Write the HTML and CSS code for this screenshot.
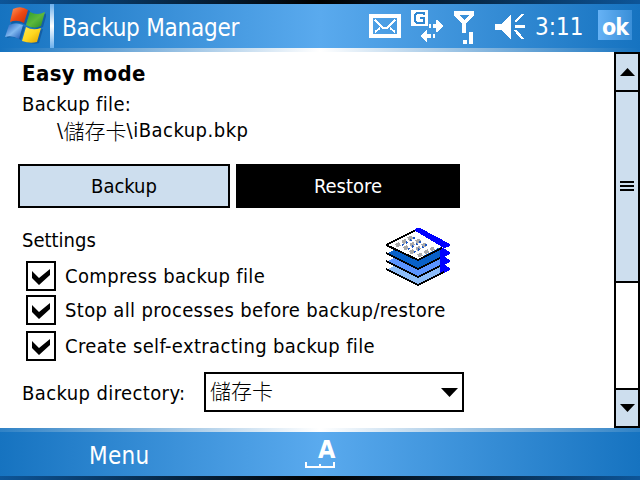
FILE: index.html
```html
<!DOCTYPE html>
<html lang="en">
<head>
    <meta charset="UTF-8">
    <title>Backup Manager</title>
    <link rel="stylesheet" href="styles.css">
</head>
<body>
    <header class="title-bar">
        <svg class="flag" width="42" height="38" viewBox="0 0 42 38">
            <defs>
                <linearGradient id="red" x2="1" y2="1"><stop offset="0" stop-color="#ff9a60"/><stop offset=".5" stop-color="#ee4a14"/><stop offset="1" stop-color="#c42c08"/></linearGradient>
                <linearGradient id="green" x2="1" y2="1"><stop offset="0" stop-color="#2c9c30"/><stop offset=".5" stop-color="#5cb83c"/><stop offset="1" stop-color="#248828"/></linearGradient>
                <linearGradient id="blue" x2="1" y2="1"><stop offset="0" stop-color="#1c58b8"/><stop offset=".5" stop-color="#80b8f0"/><stop offset="1" stop-color="#1450b0"/></linearGradient>
                <linearGradient id="yellow" x2="1" y2="1"><stop offset="0" stop-color="#ffe850"/><stop offset=".5" stop-color="#ffd820"/><stop offset="1" stop-color="#e0a000"/></linearGradient>
            </defs>
            <g fill="#0c4c90" opacity=".6">
                <path d="M10 3q8-4 16 1l-4 14q-7-4-15-1z"/>
                <path d="M28 6q7 4 15 0l-4 14q-7 4-14-1z"/>
                <path d="M6 19q8-3 15 1l-4 13q-7-5-14-2z"/>
                <path d="M24 21q7 4 15 1l-4 14q-7 2-15-2z"/>
            </g>
            <path fill="url(#red)" d="M9 2q8-4 15 1l-4 13q-7-4-14-1z"/>
            <path fill="url(#green)" d="M26 5q7 4 15 0l-4 14q-7 4-15-1z"/>
            <path fill="url(#blue)" d="M5 18q7-3 14 0l-4 14q-7-4-14-2z"/>
            <path fill="url(#yellow)" d="M22 20q7 4 15 1l-4 14q-7 2-15-1z"/>
        </svg>
        <div class="divider"></div>
        <h1 class="title">Backup Manager</h1>
        <div class="status">
            <svg width="32" height="24" viewBox="0 0 32 24" shape-rendering="crispEdges">
                <path fill="none" stroke="#fff" stroke-width="4" d="M2 2h28v20H2z"/>
                <path fill="none" stroke="#fff" stroke-width="2" d="M6 6l8 8h4l8-8M6 18l5-4M26 18l-5-4"/>
            </svg>
            <svg class="gprs" width="32" height="32" viewBox="0 0 32 32" shape-rendering="crispEdges">
                <path fill="#fff" d="M0 0h17v16H0z"/>
                <path fill="none" stroke="#2f87d2" stroke-width="2" d="M13 5V3H6L4 5v6l2 2h7V8H9"/>
                <path fill="#fff" d="M18 14h2v4h-2zM22 14h3v-4h1l6 6-6 6h-1v-4h-3zM22 24h2v4h-2zM20 24h-4v-4h-1l-6 6 6 6h1v-4h4z"/>
            </svg>
            <svg class="signal" width="20" height="34" viewBox="0 0 20 34" shape-rendering="crispEdges">
                <path fill="#fff" fill-rule="evenodd" d="M0 0h20v4l-8 9v9H8v-9L0 4zM5 4l5 5 5-5zM9 29h4v4H9zM15 21h4v12h-4z"/>
            </svg>
            <svg class="speaker" width="31" height="26" viewBox="0 0 31 26" shape-rendering="crispEdges">
                <path fill="#fff" d="M0 10h6L16 0v25L6 16H0z"/>
                <path fill="none" stroke="#fff" stroke-width="2.400" d="M20 8l8-8M20 12.500h10M20 16l8 9"/>
            </svg>
            <span class="clock">3:11</span>
            <button class="ok">ok</button>
        </div>
    </header>

    <main class="window">
        <div class="content">
            <h2 class="heading">Easy mode</h2>
            <div class="label">Backup file:</div>
            <div class="path"><span>\</span><span class="cjk">儲存卡</span><span>\iBackup.bkp</span></div>

            <div class="buttons">
                <button class="btn backup">Backup</button>
                <button class="btn restore">Restore</button>
            </div>

            <div class="settings">
                <div class="options">
                    <div class="settings-title">Settings</div>
                    <div class="option">
                        <svg class="check" viewBox="2 2 26 26"><path d="M6 10l7 7 11-9v6L13 24 6 17z"/></svg>
                        <span>Compress backup file</span>
                    </div>
                    <div class="option">
                        <svg class="check" viewBox="2 2 26 26"><path d="M6 10l7 7 11-9v6L13 24 6 17z"/></svg>
                        <span>Stop all processes before backup/restore</span>
                    </div>
                    <div class="option last">
                        <svg class="check" viewBox="2 2 26 26"><path d="M6 10l7 7 11-9v6L13 24 6 17z"/></svg>
                        <span>Create self-extracting backup file</span>
                    </div>
                </div>
                <!-- stack of sheets, drawn on a 32px grid -->
                <svg class="stack" width="64" height="58" viewBox="0 0 32 29" shape-rendering="crispEdges">
                    <path fill="#8cbcf8" d="M1 20.500l15-8 15 8-15 7.500z"/>
                    <path fill="#00f" d="M27 17l5 3v1l-4 2h-1z"/>
                    <path class="edge" d="M0 20.500l16 8 13-6.500"/>
                    <path fill="#5a94ff" d="M1 16.500l15-8 15 8-15 7.500z"/>
                    <path fill="#00f" d="M27 13l5 3v1l-4 2h-1z"/>
                    <path class="edge" d="M0 16.500l16 8 11-5.500"/>
                    <path fill="#0860c8" d="M1 12.500l15-8 15 8-15 7.500z"/>
                    <path fill="#00f" d="M27 9l5 3v1l-4 2h-1z"/>
                    <path class="edge" d="M0 12.500l16 8 11-5.500"/>
                    <path fill="#fff" d="M1 8.500l14-7 14 7-13 7z"/>
                    <path class="edge" d="M15 1L0 8.500l16 7.500 12-6"/>
                    <path fill="#00f" d="M14 1l1-1h2l15 8v1l-3 1z"/>
                    <path fill="none" stroke="#aaa" stroke-width="2" stroke-dasharray="2.300 1.200" d="M5 9l9-5M9 10.500l9-5M12 12.500l9-5M16 14l8-4"/>
                    <path fill="none" stroke="#1a56c4" stroke-dasharray="1 1.200" d="M8 8.500l7-4M11 10.500l7-4M14 12l7-4"/>
                </svg>
            </div>

            <div class="directory">
                <span class="text-dir">Backup directory:</span>
                <div class="select">
                    <span class="cjk">儲存卡</span>
                    <svg width="17" height="9" viewBox="0 0 17 9"><path d="M0 0h17L8.500 9z"/></svg>
                </div>
            </div>
        </div>

        <div class="scrollbar">
            <div class="arrow"><svg width="15" height="8" viewBox="0 0 15 8"><path d="M0 8h15L7.500 0z"/></svg></div>
            <div class="thumb"><i></i><i></i><i></i></div>
            <div class="track"></div>
            <div class="arrow"><svg width="15" height="8" viewBox="0 0 15 8"><path d="M0 0h15L7.500 8z"/></svg></div>
        </div>
    </main>

    <footer class="menu-bar">
        <span class="menu">Menu</span>
        <div class="input-mode">
            <span class="letter">A</span>
            <svg width="30" height="6" viewBox="0 0 30 6" shape-rendering="crispEdges"><path fill="#fff" d="M0 0h2v4h12V2h2v2h12V0h2v6H0z"/></svg>
        </div>
    </footer>
</body>
</html>
```
FILE: styles.css
```css
* {
    box-sizing: border-box;
}

body {
    margin: 0;
    width: 640px;
    height: 480px;
    overflow: hidden;
    display: flex;
    flex-direction: column;
    background: #fff;
    color: #000;
    font-family: "DejaVu Sans Condensed", "DejaVu Sans", "Noto Sans CJK TC", sans-serif;
    font-stretch: condensed;
    font-size: 20px;
    line-height: 26px;
    white-space: nowrap;
}

h1, h2 {
    margin: 0;
}

button {
    font: inherit;
    padding: 0;
    border: 0;
    border-radius: 0;
}

/* Top and bottom bars */
.title-bar, .menu-bar {
    height: 52px;
    flex: none;
    display: flex;
    color: #fff;
}

.title-bar {
    background:
        linear-gradient(90deg, #0d5598, #000 50%, #0d5598) 0 0 / 100% 4px no-repeat,
        linear-gradient(90deg, #1673c0, #fff 50%, #1673c0) 0 48px / 100% 4px no-repeat,
        linear-gradient(90deg, #1673c0, #5aaaee 50%, #1673c0);
}

.menu-bar {
    background:
        linear-gradient(90deg, #2f82c6, #fff 50%, #2f82c6) 0 0 / 100% 4px no-repeat,
        linear-gradient(90deg, #0d5598, #000 50%, #0d5598) 0 48px / 100% 4px no-repeat,
        linear-gradient(90deg, #1673c0, #5aaaee 50%, #1673c0);
}

.flag {
    margin: 7px 0 0 4px;
    flex: none;
}

.divider {
    width: 4px;
    height: 44px;
    margin: 4px 0 0 4px;
    background: linear-gradient(#6cb0ec, #fff 50%, #6cb0ec);
}

.title {
    margin: 12px 0 0 8px;
    font-size: 24px;
    font-weight: normal;
    letter-spacing: -0.25px;
    line-height: 32px;
}

.status {
    margin: 10px 8px 0 auto;
    display: flex;
}

.status > svg {
    flex: none;
    margin-top: 4px;
}

.status .gprs {
    margin: 0 0 0 10px;
}

.status .signal {
    margin: 1px 0 0 11px;
}

.status .speaker {
    margin: 4px 0 0 21px;
}

.clock {
    width: 46px;
    margin: 1px 0 0 9px;
    font-size: 24px;
    line-height: 32px;
}

.ok {
    width: 34px;
    height: 30px;
    margin-left: 17px;
    background: linear-gradient(90deg, #66b2f5, #3a8fd8);
    color: #fff;
    font-weight: bold;
    font-size: 23px;
    letter-spacing: -1px;
    line-height: 34px;
}

/* Form */
.window {
    height: 376px;
    display: flex;
}

.content {
    width: 614px;
    padding: 9px 0 0 18px;
}

.heading {
    padding-left: 4px;
    font-size: 22px;
    letter-spacing: 0.4px;
    line-height: 26px;
}

.label {
    margin-top: 4px;
    padding-left: 4px;
    letter-spacing: 0.35px;
}

.path {
    padding-left: 39px;
    display: flex;
    letter-spacing: 0.5px;
}

.cjk {
    font-family: "Noto Sans CJK TC", sans-serif;
    font-weight: 300;
    font-size: 21px;
    letter-spacing: 0;
}

.buttons {
    margin-top: 21px;
    display: flex;
    gap: 6px;
}

.btn {
    height: 44px;
    line-height: 44px;
}

.backup {
    width: 212px;
    border: 2px solid #000;
    line-height: 40px;
    background: #cddeee;
    color: #000;
}

.restore {
    width: 224px;
    background: #000;
    color: #fff;
}

.settings {
    display: flex;
    margin-top: 19px;
}

.options {
    width: 367px;
}

.settings-title {
    padding-left: 4px;
    height: 34px;
}

.option {
    height: 30px;
    margin-bottom: 4px;
    padding-left: 8px;
    display: flex;
    gap: 9px;
    line-height: 31px;
    letter-spacing: 0.35px;
}

.option.last {
    margin-top: 6px;
}

.check {
    width: 30px;
    height: 30px;
    border: 2px solid #000;
    flex: none;
}

.stack {
    margin: 1px 0 0 1px;
    flex: none;
}

.edge {
    fill: none;
    stroke: #000;
}

.directory {
    display: flex;
    margin-top: 7px;
    padding-left: 4px;
}

.text-dir {
    width: 182px;
    letter-spacing: 0.4px;
    line-height: 43px;
}

.select {
    width: 260px;
    height: 40px;
    padding: 0 4px;
    border: 2px solid #000;
    display: flex;
    justify-content: space-between;
    align-items: center;
}

.select .cjk {
    padding-bottom: 4px;
}

/* Scrollbar */
.scrollbar {
    width: 26px;
    border: 2px solid #000;
    display: flex;
    flex-direction: column;
}

.arrow {
    height: 36px;
    display: flex;
    align-items: center;
    justify-content: center;
    background: #cddeee;
}

.thumb {
    height: 193px;
    padding-bottom: 2px;
    border: solid #000;
    border-width: 2px 0;
    display: flex;
    flex-direction: column;
    align-items: center;
    justify-content: center;
    gap: 2px;
    background: #cddeee;
}

.thumb i {
    width: 14px;
    height: 2px;
    background: #000;
}

.track {
    flex: 1;
    border-bottom: 2px solid #000;
}

/* Bottom bar items */
.menu {
    width: 215px;
    margin: 12px 0 0 89px;
    font-size: 24px;
    letter-spacing: 0.3px;
    line-height: 32px;
}

.input-mode {
    padding-top: 10px;
    width: 32px;
    display: flex;
    flex-direction: column;
}

.input-mode svg {
    margin-left: 1px;
}

.letter {
    margin-left: 14px;
    height: 24px;
    font-family: "DejaVu Sans Condensed", sans-serif;
    font-weight: bold;
    font-size: 25px;
    letter-spacing: -1px;
    line-height: 24px;
}
```
